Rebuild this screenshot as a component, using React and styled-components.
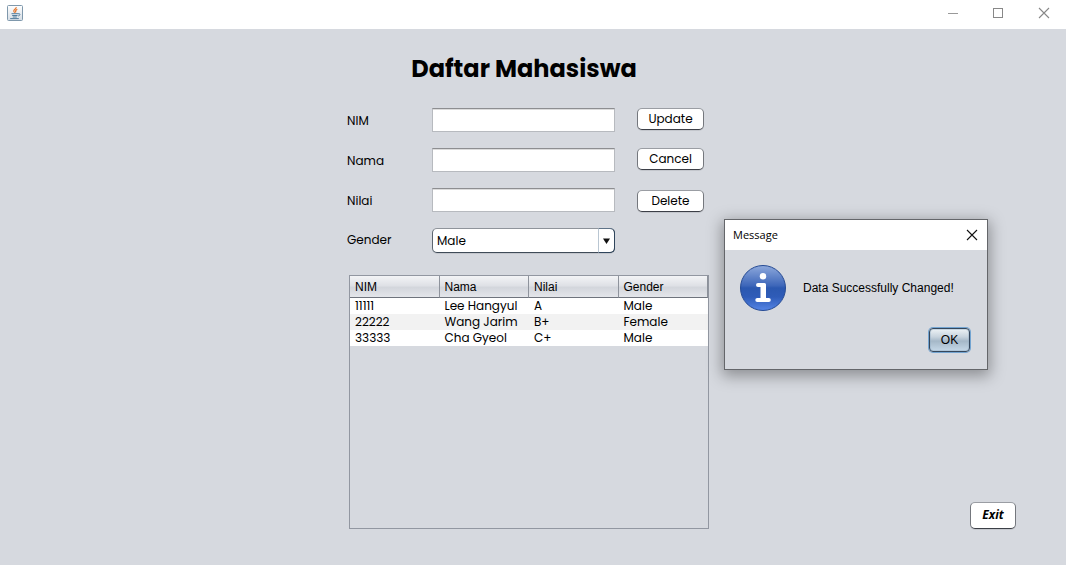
import React from "react";
import styled, { createGlobalStyle } from "styled-components";

const Global = createGlobalStyle`
  *, *::before, *::after { box-sizing: border-box; }
  body { margin: 0; background: #d6d9df; color: #000; }
  body, button, input, select { font-family: Poppins, Inter, sans-serif; font-size: 12px; }
`;

const Window = styled.div`
  min-height: 100vh;
  display: flex;
  flex-direction: column;
  position: relative;
`;

const TitleBar = styled.header`
  height: 29px;
  padding: 0 0 3px 7px;
  background: #fff;
  display: flex;
  align-items: center;
  justify-content: space-between;
`;

const WindowControls = styled.div`
  display: flex;
  height: 26px;
  align-self: flex-start;
`;

const IconButton = styled.button`
  width: ${(p) => p.$width}px;
  padding: 0;
  border: 0;
  background: transparent;
  display: flex;
  align-items: center;
  justify-content: center;
`;

const Main = styled.main`
  flex: 1;
  display: grid;
  grid-template-columns: minmax(0, 1fr) 362px minmax(0, 1fr);
  padding: 22px 10px 36px 0;
`;

const Content = styled.section`
  grid-column: 2;
  display: flex;
  flex-direction: column;
`;

const Heading = styled.h1`
  margin: 0 0 21px;
  padding-right: 8px;
  font-size: 24px;
  line-height: 36px;
  font-weight: 700;
  text-align: center;
`;

const Form = styled.form`
  display: flex;
  flex-direction: column;
  gap: 16px;
  margin-bottom: 22px;
`;

const FormRow = styled.div`
  display: grid;
  grid-template-columns: 85px 183px 67px;
  align-items: start;
  > button { margin-left: 22px; width: 67px; align-self: ${(p) => p.$buttonAlign || "start"}; }
`;

const Label = styled.label`
  line-height: ${(p) => p.$line || 26}px;
  height: 24px;
`;

const TextField = styled.input`
  width: 100%;
  height: 24px;
  padding: 2px 5px;
  border: 1px solid #b7babf;
  border-top-color: #8d8e91;
  border-radius: 0;
  background: #fff;
  box-shadow: inset 0 1px 0 #dcdcdc;
  outline: none;
`;

const Button = styled.button`
  height: ${(p) => p.$height || 22}px;
  padding: 0;
  border: 1px solid #74777d;
  border-top-color: #9a9da3;
  border-bottom-color: #3c3f47;
  border-radius: 5px;
  background: #fff;
  box-shadow: 0 1px 0 #c3c6cc;
  line-height: 20px;
`;

const ExitButton = styled(Button)`
  grid-column: 3;
  align-self: end;
  justify-self: end;
  width: 46px;
  margin-right: 40px;
  padding-bottom: 2px;
  font-family: "Open Sans", sans-serif;
  font-weight: 700;
  font-style: italic;
`;

const Dropdown = styled.div`
  position: relative;
  height: 25px;
`;

const Select = styled.select`
  appearance: none;
  width: 100%;
  height: 100%;
  padding: 0 20px 1px 4px;
  border: 1px solid #5c6570;
  border-top-color: #8f949b;
  border-bottom-color: #3f4b58;
  border-radius: 5px;
  background: #fff;
  color: #000;
  outline: none;
  box-shadow: 0 1px 0 #c3c6cc;
`;

const DropdownArrow = styled.span`
  position: absolute;
  top: 0;
  right: 0;
  width: 17px;
  height: 100%;
  border: 1px solid #2f455c;
  border-top-color: #5f7388;
  border-left-color: #b9c6d2;
  border-radius: 0 5px 5px 0;
  display: flex;
  align-items: center;
  justify-content: center;
  pointer-events: none;
`;

const ScrollPane = styled.div`
  flex: 1;
  margin: 0 0 0 2px;
  border: 1px solid #9297a1;
`;

const Table = styled.table`
  width: 100%;
  table-layout: fixed;
  border-collapse: separate;
  border-spacing: 0;
`;

const HeaderCell = styled.th`
  height: 22px;
  padding: 0 0 0 5px;
  border-right: 1px solid #8e939c;
  border-bottom: 1px solid #6f747d;
  background: linear-gradient(#f3f4f6 0%, #dfe1e6 45%, #d3d6dc 55%, #e4e6ea 100%);
  font-family: "Liberation Sans", Arial, sans-serif;
  font-size: 12px;
  font-weight: 400;
  text-align: left;
`;

const BodyRow = styled.tr`
  background: #fff;
  &:nth-child(even) { background: #f2f2f2; }
`;

const Cell = styled.td`
  height: 16px;
  padding: 0 0 0 5px;
  line-height: 16px;
  white-space: nowrap;
`;

const Dialog = styled.div`
  position: absolute;
  top: 219px;
  left: calc(50% + 191px);
  width: 264px;
  border: 1px solid #64666a;
  background: #d6d9df;
  box-shadow: 0 4px 14px 2px rgba(0, 0, 0, 0.34);
`;

const DialogBar = styled.div`
  height: 30px;
  padding-left: 8px;
  background: #fff;
  display: flex;
  align-items: stretch;
  justify-content: space-between;
`;

const DialogTitle = styled.h2`
  margin: 0;
  font-family: "Segoe UI", "Open Sans", sans-serif;
  font-size: 11px;
  font-weight: 400;
  line-height: 30px;
`;

const DialogBody = styled.div`
  padding: 15px 16px 16px 15px;
`;

const MessageLine = styled.div`
  display: flex;
  align-items: center;
  gap: 17px;
  margin-bottom: 17px;
  font-family: "Liberation Sans", Arial, sans-serif;
  font-size: 12px;
  white-space: nowrap;
`;

const OkButton = styled.button`
  display: block;
  width: 41px;
  height: 24px;
  margin: 0 1px 1px auto;
  padding: 0;
  border: 1px solid #34475c;
  border-radius: 4px;
  background: linear-gradient(#edf2f5 0%, #c8d4de 35%, #a5b8c8 55%, #c5d8e8 100%);
  box-shadow: 0 0 0 1px #73a4d1, inset 0 0 0 1px rgba(143, 170, 194, 0.4);
  font-family: "Liberation Sans", Arial, sans-serif;
  font-size: 12px;
  outline: none;
`;

const JavaIcon = () => (
  <svg width="16" height="16" viewBox="0 0 16 16" aria-hidden="true">
    <defs>
      <linearGradient id="tile" x1="0" y1="0" x2="0" y2="1">
        <stop offset="0" stopColor="#fff" />
        <stop offset="1" stopColor="#d5dde5" />
      </linearGradient>
    </defs>
    <rect x=".5" y=".5" width="15" height="15" rx="1" fill="url(#tile)" stroke="#7f98ac" />
    <path d="M9.2 2.200C9.6 4 6.300 4.600 6.800 6.200L7.700 7.800M10.300 4.300C8.200 5.200 8.200 5.900 8.700 7.500" fill="none" stroke="#e5762d" strokeWidth="1.2" />
    <path d="M4.500 8.700h6.500M5.200 10.500h5.300M5.800 12h4M3.200 13.600h8.600M11 8.800c2.600-.7 2.600 1.700.2 2.200" fill="none" stroke="#426f93" strokeWidth=".9" />
  </svg>
);

const InfoIcon = () => (
  <svg width="46" height="46" viewBox="0 0 46 46" aria-hidden="true">
    <defs>
      <linearGradient id="disc" x1="0" y1="0" x2="0" y2="1">
        <stop offset="0" stopColor="#8ea9dc" />
        <stop offset=".45" stopColor="#3d66b9" />
        <stop offset=".5" stopColor="#2b58b0" />
        <stop offset=".7" stopColor="#2f5cb8" />
        <stop offset="1" stopColor="#5585e6" />
      </linearGradient>
    </defs>
    <circle cx="23" cy="23" r="22.5" fill="url(#disc)" stroke="#264b94" />
    <circle cx="23" cy="11.2" r="3.2" fill="#fff" />
    <path d="M18 18h6.5q1.5 0 1.5 1.5V33h2.800q2 0 2 2t-2 2H17.300q-2 0-2-2t2-2H20.500v-11h-2.500q-2 0-2-2t2-2z" fill="#fff" />
  </svg>
);

const CloseIcon = ({ color }) => (
  <svg width="12" height="12" viewBox="0 0 12 12" aria-hidden="true">
    <path d="M1 1l10 10M11 1L1 11" stroke={color} strokeWidth="1.1" />
  </svg>
);

const fields = [
  { id: "nim", label: "NIM", action: "Update" },
  { id: "nama", label: "Nama", action: "Cancel" },
  { id: "nilai", label: "Nilai", action: "Delete", align: "end" },
];

const columns = ["NIM", "Nama", "Nilai", "Gender"];

const students = [
  ["11111", "Lee Hangyul", "A", "Male"],
  ["22222", "Wang Jarim", "B+", "Female"],
  ["33333", "Cha Gyeol", "C+", "Male"],
];

export default function App() {
  return (
    <Window>
      <Global />
      <TitleBar>
        <JavaIcon />
        <WindowControls>
          <IconButton $width={45} aria-label="Minimize">
            <svg width="10" height="10" aria-hidden="true"><path d="M0 5.5h10" stroke="#999" /></svg>
          </IconButton>
          <IconButton $width={46} aria-label="Maximize">
            <svg width="10" height="10" aria-hidden="true"><rect x=".5" y=".5" width="9" height="9" fill="none" stroke="#888" /></svg>
          </IconButton>
          <IconButton $width={45} aria-label="Close"><CloseIcon color="#888" /></IconButton>
        </WindowControls>
      </TitleBar>

      <Main>
        <Content>
          <Heading>Daftar Mahasiswa</Heading>
          <Form>
            {fields.map((f) => (
              <FormRow key={f.id} $buttonAlign={f.align}>
                <Label htmlFor={f.id}>{f.label}</Label>
                <TextField id={f.id} type="text" />
                <Button type="button">{f.action}</Button>
              </FormRow>
            ))}
            <FormRow>
              <Label htmlFor="gender" $line={24}>Gender</Label>
              <Dropdown>
                <Select id="gender" defaultValue="Male">
                  <option>Male</option>
                  <option>Female</option>
                </Select>
                <DropdownArrow>
                  <svg width="7" height="6" aria-hidden="true"><path d="M0 .5h7L3.5 6z" fill="#111" /></svg>
                </DropdownArrow>
              </Dropdown>
            </FormRow>
          </Form>
          <ScrollPane>
            <Table>
              <thead>
                <tr>{columns.map((c) => <HeaderCell key={c} scope="col">{c}</HeaderCell>)}</tr>
              </thead>
              <tbody>
                {students.map((s) => (
                  <BodyRow key={s[0]}>{s.map((v, i) => <Cell key={columns[i]}>{v}</Cell>)}</BodyRow>
                ))}
              </tbody>
            </Table>
          </ScrollPane>
        </Content>
        <ExitButton type="button" $height={27}>Exit</ExitButton>
      </Main>

      <Dialog role="dialog" aria-labelledby="message-title">
        <DialogBar>
          <DialogTitle id="message-title">Message</DialogTitle>
          <IconButton $width={30} aria-label="Close message"><CloseIcon color="#111" /></IconButton>
        </DialogBar>
        <DialogBody>
          <MessageLine>
            <InfoIcon />
            <span>Data Successfully Changed!</span>
          </MessageLine>
          <OkButton type="button">OK</OkButton>
        </DialogBody>
      </Dialog>
    </Window>
  );
}
